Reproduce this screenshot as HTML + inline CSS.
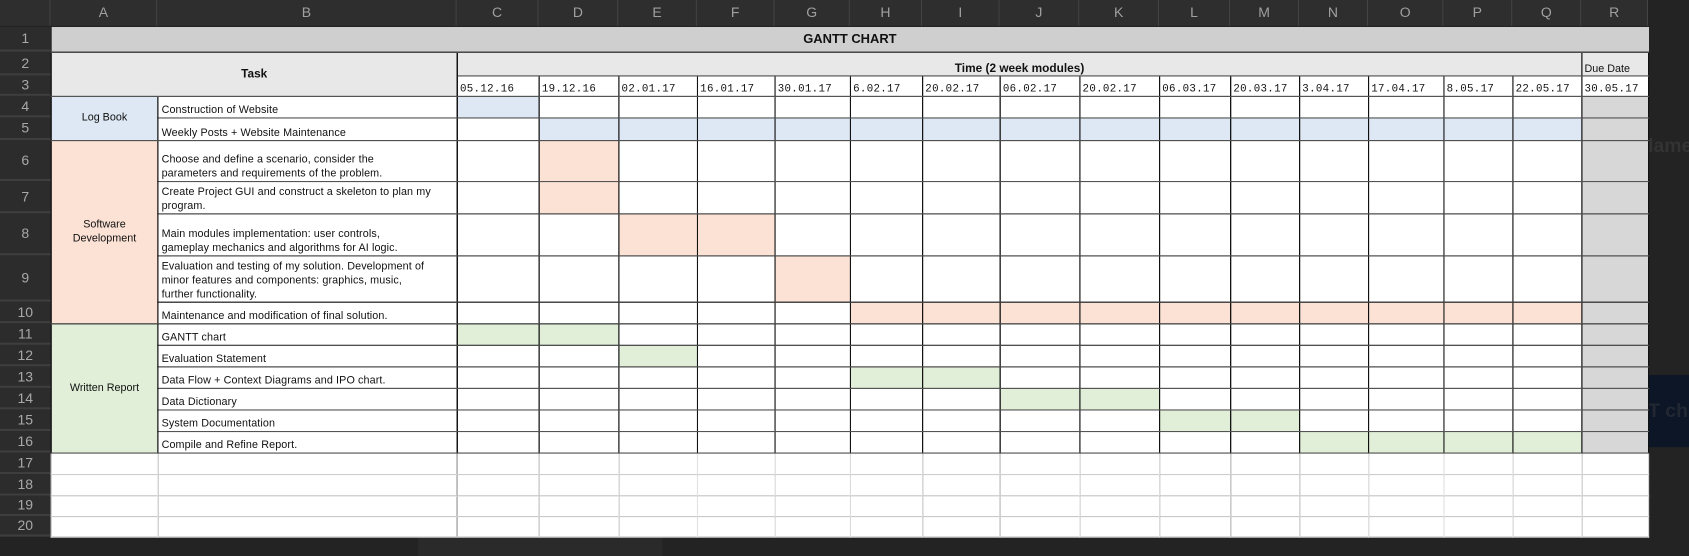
<!DOCTYPE html>
<html><head><meta charset="utf-8"><style>
html,body{margin:0;padding:0;background:#232323;overflow:hidden;width:1689px;height:556px}
#w{position:absolute;left:0;top:0;width:1568px;height:516px;transform:scale(1.07717,1.07752);transform-origin:0 0;background:#232323;font-family:"Liberation Sans",sans-serif}
.ch{position:absolute;top:0;height:24px;background:#2e2e2e;border-right:1px solid #444;color:#a0a0a0;font-size:13px;text-align:center;line-height:24px;box-sizing:border-box}
.rh{position:absolute;left:0;width:47px;background:#2c2c2c;border-bottom:2px solid #3e3e3e;color:#a8a8a8;font-size:13px;text-align:center;box-sizing:border-box;display:flex;align-items:center;justify-content:center}
table{position:absolute;left:47px;top:25px;border-collapse:collapse;table-layout:fixed;width:1483px;font-family:"Liberation Sans",sans-serif;font-size:10px;color:#111}
td{padding:0;border-left:1px solid #111;border-right:1px solid #111;border-top:1.5px solid #555;border-bottom:1.5px solid #555;background:#fff;overflow:hidden;white-space:nowrap}
td.t{padding-left:3px;white-space:normal;line-height:13px;vertical-align:bottom;font-size:10px;letter-spacing:0.1px}
.b{background:#dde8f4}.p{background:#fbe2d5}.g{background:#e1efd9}.r{background:#d7d7d7}
.d{font-family:"Liberation Mono",monospace;font-size:10px;letter-spacing:0.3px;padding-left:2px;vertical-align:bottom}
tr.e td{border:1px solid #e2e2e2;background:#fff}
.c{text-align:center}
</style></head><body><div id="w">
<div class="ch" style="left:0;width:47px"></div>
<div class="ch" style="left:47px;width:99px">A</div>
<div class="ch" style="left:146px;width:278px">B</div>
<div class="ch" style="left:424px;width:76px">C</div>
<div class="ch" style="left:500px;width:74px">D</div>
<div class="ch" style="left:574px;width:73px">E</div>
<div class="ch" style="left:647px;width:72px">F</div>
<div class="ch" style="left:719px;width:70px">G</div>
<div class="ch" style="left:789px;width:67px">H</div>
<div class="ch" style="left:856px;width:72px">I</div>
<div class="ch" style="left:928px;width:74px">J</div>
<div class="ch" style="left:1002px;width:74px">K</div>
<div class="ch" style="left:1076px;width:66px">L</div>
<div class="ch" style="left:1142px;width:64px">M</div>
<div class="ch" style="left:1206px;width:64px">N</div>
<div class="ch" style="left:1270px;width:70px">O</div>
<div class="ch" style="left:1340px;width:64px">P</div>
<div class="ch" style="left:1404px;width:64px">Q</div>
<div class="ch" style="left:1468px;width:62px">R</div>
<div class="ch" style="left:1530px;width:38px;background:#232323;border:none"></div>

<div class="rh" style="top:25px;height:23px">1</div>
<div class="rh" style="top:48px;height:22px">2</div>
<div class="rh" style="top:70px;height:19px">3</div>
<div class="rh" style="top:89px;height:20px">4</div>
<div class="rh" style="top:109px;height:21px">5</div>
<div class="rh" style="top:130px;height:38px">6</div>
<div class="rh" style="top:168px;height:30px">7</div>
<div class="rh" style="top:198px;height:39px">8</div>
<div class="rh" style="top:237px;height:43px">9</div>
<div class="rh" style="top:280px;height:20px">10</div>
<div class="rh" style="top:300px;height:20px">11</div>
<div class="rh" style="top:320px;height:20px">12</div>
<div class="rh" style="top:340px;height:20px">13</div>
<div class="rh" style="top:360px;height:20px">14</div>
<div class="rh" style="top:380px;height:20px">15</div>
<div class="rh" style="top:400px;height:20px">16</div>
<div class="rh" style="top:420px;height:20px">17</div>
<div class="rh" style="top:440px;height:20px">18</div>
<div class="rh" style="top:460px;height:19px">19</div>
<div class="rh" style="top:479px;height:19px">20</div>

<div style="position:absolute;left:388px;top:498px;width:227px;height:18px;background:#2a2a2a"></div>
<div style="position:absolute;left:1530px;top:120px;width:38px;height:30px;color:#333;font-size:18px;font-weight:bold;line-height:30px;overflow:hidden">lame</div>
<div style="position:absolute;left:1530px;top:348px;width:38px;height:67px;background:#0c1626;color:#222833;font-size:18px;font-weight:bold;line-height:67px;overflow:hidden">T ch</div>

<table>
<colgroup><col style="width:99px"><col style="width:278px"><col style="width:76px"><col style="width:74px"><col style="width:73px"><col style="width:72px"><col style="width:70px"><col style="width:67px"><col style="width:72px"><col style="width:74px"><col style="width:74px"><col style="width:66px"><col style="width:64px"><col style="width:64px"><col style="width:70px"><col style="width:64px"><col style="width:64px"><col style="width:62px"></colgroup>
<tr style="height:23px"><td colspan="18" class="c" style="background:#d0cfd0;font-weight:bold;font-size:12px;border-top:none;border-left:none;border-right:none">GANTT CHART</td></tr>
<tr style="height:22px"><td colspan="2" rowspan="2" class="c" style="background:#e8e8e8;font-weight:bold;font-size:11px">Task</td><td colspan="15" class="c" style="background:#e8e8e8;font-weight:bold;font-size:11px;vertical-align:bottom">Time (2 week modules)</td><td style="background:#e8e8e8;padding-left:2px;vertical-align:bottom">Due Date</td></tr>
<tr style="height:19px"><td class="d">05.12.16</td><td class="d">19.12.16</td><td class="d">02.01.17</td><td class="d">16.01.17</td><td class="d">30.01.17</td><td class="d">6.02.17</td><td class="d">20.02.17</td><td class="d">06.02.17</td><td class="d">20.02.17</td><td class="d">06.03.17</td><td class="d">20.03.17</td><td class="d">3.04.17</td><td class="d">17.04.17</td><td class="d">8.05.17</td><td class="d">22.05.17</td><td class="d">30.05.17</td></tr>
<tr style="height:20px"><td rowspan="2" class="b c">Log Book</td><td class="t">Construction of Website</td><td class="b"></td><td></td><td></td><td></td><td></td><td></td><td></td><td></td><td></td><td></td><td></td><td></td><td></td><td></td><td></td><td class="r"></td></tr>
<tr style="height:21px"><td class="t">Weekly Posts + Website Maintenance</td><td></td><td class="b"></td><td class="b"></td><td class="b"></td><td class="b"></td><td class="b"></td><td class="b"></td><td class="b"></td><td class="b"></td><td class="b"></td><td class="b"></td><td class="b"></td><td class="b"></td><td class="b"></td><td class="b"></td><td class="r"></td></tr>
<tr style="height:38px"><td rowspan="5" class="p c" style="white-space:normal;line-height:13px">Software<br>Development</td><td class="t">Choose and define a scenario, consider the<br>parameters and requirements of the problem.</td><td></td><td class="p"></td><td></td><td></td><td></td><td></td><td></td><td></td><td></td><td></td><td></td><td></td><td></td><td></td><td></td><td class="r"></td></tr>
<tr style="height:30px"><td class="t">Create Project GUI and construct a skeleton to plan my<br>program.</td><td></td><td class="p"></td><td></td><td></td><td></td><td></td><td></td><td></td><td></td><td></td><td></td><td></td><td></td><td></td><td></td><td class="r"></td></tr>
<tr style="height:39px"><td class="t">Main modules implementation: user controls,<br>gameplay mechanics and algorithms for AI logic.</td><td></td><td></td><td class="p"></td><td class="p"></td><td></td><td></td><td></td><td></td><td></td><td></td><td></td><td></td><td></td><td></td><td></td><td class="r"></td></tr>
<tr style="height:43px"><td class="t">Evaluation and testing of my solution. Development of<br>minor features and components: graphics, music,<br>further functionality.</td><td></td><td></td><td></td><td></td><td class="p"></td><td></td><td></td><td></td><td></td><td></td><td></td><td></td><td></td><td></td><td></td><td class="r"></td></tr>
<tr style="height:20px"><td class="t">Maintenance and modification of final solution.</td><td></td><td></td><td></td><td></td><td></td><td class="p"></td><td class="p"></td><td class="p"></td><td class="p"></td><td class="p"></td><td class="p"></td><td class="p"></td><td class="p"></td><td class="p"></td><td class="p"></td><td class="r"></td></tr>
<tr style="height:20px"><td rowspan="6" class="g c">Written Report</td><td class="t">GANTT chart</td><td class="g"></td><td class="g"></td><td></td><td></td><td></td><td></td><td></td><td></td><td></td><td></td><td></td><td></td><td></td><td></td><td></td><td class="r"></td></tr>
<tr style="height:20px"><td class="t">Evaluation Statement</td><td></td><td></td><td class="g"></td><td></td><td></td><td></td><td></td><td></td><td></td><td></td><td></td><td></td><td></td><td></td><td></td><td class="r"></td></tr>
<tr style="height:20px"><td class="t">Data Flow + Context Diagrams and IPO chart.</td><td></td><td></td><td></td><td></td><td></td><td class="g"></td><td class="g"></td><td></td><td></td><td></td><td></td><td></td><td></td><td></td><td></td><td class="r"></td></tr>
<tr style="height:20px"><td class="t">Data Dictionary</td><td></td><td></td><td></td><td></td><td></td><td></td><td></td><td class="g"></td><td class="g"></td><td></td><td></td><td></td><td></td><td></td><td></td><td class="r"></td></tr>
<tr style="height:20px"><td class="t">System Documentation</td><td></td><td></td><td></td><td></td><td></td><td></td><td></td><td></td><td></td><td class="g"></td><td class="g"></td><td></td><td></td><td></td><td></td><td class="r"></td></tr>
<tr style="height:20px"><td class="t">Compile and Refine Report.</td><td></td><td></td><td></td><td></td><td></td><td></td><td></td><td></td><td></td><td></td><td></td><td class="g"></td><td class="g"></td><td class="g"></td><td class="g"></td><td class="r"></td></tr>
<tr class="e" style="height:20px"><td></td><td></td><td></td><td></td><td></td><td></td><td></td><td></td><td></td><td></td><td></td><td></td><td></td><td></td><td></td><td></td><td></td><td></td></tr>
<tr class="e" style="height:20px"><td></td><td></td><td></td><td></td><td></td><td></td><td></td><td></td><td></td><td></td><td></td><td></td><td></td><td></td><td></td><td></td><td></td><td></td></tr>
<tr class="e" style="height:19px"><td></td><td></td><td></td><td></td><td></td><td></td><td></td><td></td><td></td><td></td><td></td><td></td><td></td><td></td><td></td><td></td><td></td><td></td></tr>
<tr class="e" style="height:19px"><td></td><td></td><td></td><td></td><td></td><td></td><td></td><td></td><td></td><td></td><td></td><td></td><td></td><td></td><td></td><td></td><td></td><td></td></tr>
</table>
</div></body></html>
